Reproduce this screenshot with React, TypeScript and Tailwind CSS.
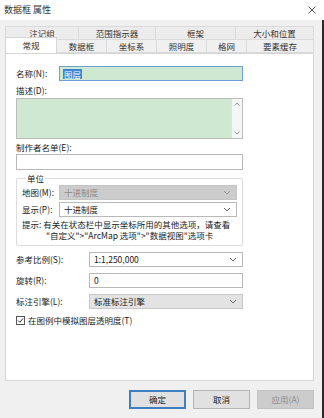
import React from "react";

const font = { fontFamily: '"Noto Sans CJK SC", "Noto Sans", sans-serif' };

function Chevron({ color = "#666" }: { color?: string }) {
  return (
    <svg width="8" height="5" viewBox="0 0 8 5" className="shrink-0">
      <path d="M1 1 L4 4 L7 1" fill="none" stroke={color} strokeWidth="1" />
    </svg>
  );
}

function Select({ value, disabled, gray, w }: { value: string; disabled?: boolean; gray?: boolean; w: string }) {
  return (
    <div
      className={`${w} h-[15px] flex items-center justify-between pl-[4px] pr-[5px] border ${
        disabled ? "bg-[#cccccc] border-[#c4c4c4] text-[#8a8a8a]" : gray ? "bg-[#e3e3e3] border-[#c9c9c9] text-[#222]" : "bg-white border-[#b9b9b9] text-[#222]"
      }`}
    >
      <span className="leading-none">{value}</span>
      <Chevron color={disabled ? "#999" : "#666"} />
    </div>
  );
}

export default function App() {
  const row1 = [
    { t: "注记组", w: "w-[73px]" },
    { t: "范围指示器", w: "w-[77px]" },
    { t: "框架", w: "w-[80px]" },
    { t: "大小和位置", w: "flex-1" },
  ];
  const row2 = [
    { t: "数据框", w: "w-[50px]" },
    { t: "坐标系", w: "w-[50px]" },
    { t: "照明度", w: "w-[50px]" },
    { t: "格网", w: "w-[40px]" },
    { t: "要素缓存", w: "flex-1" },
  ];
  return (
    <div className="w-[324px] h-[418px] bg-[#f0f0f0] flex flex-col text-[8.5px] text-[#222] overflow-hidden" style={font}>
      {/* Title bar */}
      <div className="h-[20px] bg-white flex items-center justify-between pl-[4px] pr-[8px] shrink-0">
        <span className="text-[9px] text-[#333]">数据框 属性</span>
        <svg width="8" height="8" viewBox="0 0 8 8">
          <path d="M0.5 0.5 L7.5 7.5 M7.5 0.5 L0.5 7.5" stroke="#555" strokeWidth="1" />
        </svg>
      </div>

      <div className="flex-1 flex flex-col border-r-2 border-[#2b2b2b] pr-[8px]">
        {/* Tabs */}
        <div className="mt-[6px] ml-[5px] h-[13px] flex border-t border-l border-[#dadada] bg-[#ececec]">
          {row1.map((r) => (
            <div key={r.t} className={`${r.w} border-r border-[#dadada] flex items-center justify-center text-[#333]`}>
              {r.t}
            </div>
          ))}
        </div>
        <div className="ml-[5px] h-[14px] flex relative z-10">
          <div className="w-[52px] h-[16px] -mt-[2px] bg-white border border-b-0 border-[#d6d6d6] flex items-center justify-center text-[#333]">
            常规
          </div>
          {row2.map((r) => (
            <div key={r.t} className={`${r.w} border-r border-t border-b border-[#dadada] bg-[#f0f0f0] flex items-center justify-center text-[#333]`}>
              {r.t}
            </div>
          ))}
        </div>

        {/* Panel */}
        <div className="ml-[5px] h-[328px] bg-white border border-[#d6d6d6] flex flex-col pl-[10px]">
          {/* Name */}
          <div className="mt-[12px] flex items-center h-[15px]">
            <span className="w-[43px]">名称(N):</span>
            <div className="w-[184px] h-[15px] bg-[#cfe8d2] border border-[#6f9fd1] flex items-center pl-[3px]">
              <span className="bg-[#3a86d4] text-white leading-[10px] px-[1px]">图层</span>
            </div>
          </div>
          {/* Description */}
          <div className="mt-[3px] h-[12px] flex items-center">描述(D):</div>
          <div className="mt-[2px] w-[227px] h-[41px] bg-[#cfe8d2] border border-[#bdbdbd] flex justify-end">
            <div className="w-[11px] h-full bg-[#f4f7f4] border-l border-[#e0e0e0] flex flex-col items-center justify-between py-[3px]">
              <svg width="6" height="4" viewBox="0 0 6 4">
                <path d="M0.5 3.5 L3 1 L5.5 3.5" fill="none" stroke="#999" strokeWidth="1" />
              </svg>
              <svg width="6" height="4" viewBox="0 0 6 4">
                <path d="M0.5 0.5 L3 3 L5.5 0.5" fill="none" stroke="#999" strokeWidth="1" />
              </svg>
            </div>
          </div>
          {/* Credits */}
          <div className="mt-[2px] h-[12px] flex items-center">制作者名单(E):</div>
          <div className="mt-[1px] w-[227px] h-[16px] bg-white border border-[#b9b9b9]" />

          {/* Units groupbox */}
          <fieldset className="mt-[3px] w-[227px] h-[73px] border border-[#dcdcdc] rounded-[2px] pl-[5px] m-0 p-0">
            <legend className="ml-[4px] px-[1px] leading-[10px]">单位</legend>
            <div className="mt-[2px] flex items-center">
              <span className="w-[37px]">地图(M):</span>
              <Select value="十进制度" disabled w="w-[178px]" />
            </div>
            <div className="mt-[2px] flex items-center">
              <span className="w-[37px]">显示(P):</span>
              <Select value="十进制度" w="w-[178px]" />
            </div>
            <div className="mt-[2px] leading-[11px] whitespace-nowrap">
              <div>提示: 有关在状态栏中显示坐标所用的其他选项，请查看</div>
              <div className="pl-[24px]">"自定义"&gt;"ArcMap 选项"&gt;"数据视图"选项卡</div>
            </div>
          </fieldset>

          {/* Reference scale */}
          <div className="mt-[6px] flex items-center">
            <span className="w-[73px]">参考比例(S):</span>
            <Select value="1:1,250,000" w="w-[154px]" />
          </div>
          <div className="mt-[6px] flex items-center">
            <span className="w-[73px]">旋转(R):</span>
            <div className="w-[154px] h-[15px] bg-white border border-[#b9b9b9] flex items-center pl-[4px]">0</div>
          </div>
          <div className="mt-[6px] flex items-center">
            <span className="w-[73px]">标注引擎(L):</span>
            <Select value="标准标注引擎" gray w="w-[154px]" />
          </div>
          <div className="mt-[5px] flex items-center gap-[3px]">
            <div className="w-[9px] h-[9px] border border-[#555] bg-white flex items-center justify-center">
              <svg width="7" height="7" viewBox="0 0 7 7">
                <path d="M1 3.5 L2.8 5.3 L6 1.5" fill="none" stroke="#333" strokeWidth="1" />
              </svg>
            </div>
            <span>在图例中模拟图层透明度(T)</span>
          </div>
        </div>

        {/* Buttons */}
        <div className="mt-[9px] flex justify-end gap-[7px] pr-[0px]">
          <div className="w-[57px] h-[19px] bg-[#e1e1e1] border-2 border-[#3d7fc0] flex items-center justify-center">确定</div>
          <div className="w-[57px] h-[19px] bg-[#e1e1e1] border border-[#b5b5b5] flex items-center justify-center">取消</div>
          <div className="w-[57px] h-[19px] bg-[#cccccc] border border-[#c2c2c2] text-[#8d8d8d] flex items-center justify-center">应用(A)</div>
        </div>
      </div>
    </div>
  );
}
